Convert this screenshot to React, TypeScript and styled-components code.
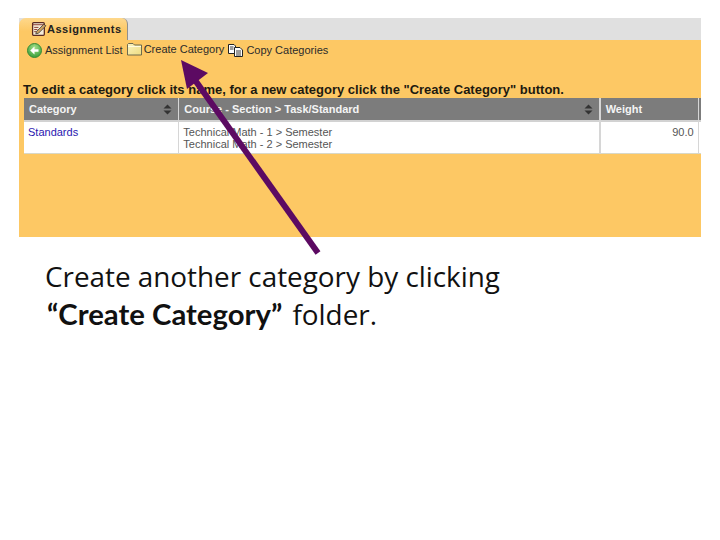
import React from 'react'
import styled, { createGlobalStyle } from 'styled-components'

const Global = createGlobalStyle`
  html, body { margin: 0; padding: 0; background: #fff; }
  body { width: 720px; height: 540px; overflow: hidden; font-family: "Liberation Sans", Arial, sans-serif; }
`

const Slide = styled.div`
  position: relative;
  width: 720px;
  height: 540px;
  padding: 18px 19px 0;
  box-sizing: border-box;
`

const Shot = styled.div`
  width: 682px;
  height: 219px;
  background: #fdc864;
  display: flex;
  flex-direction: column;
`

const TabBar = styled.div`
  height: 22px;
  background: #e0e0e0;
  display: flex;
`

const Tab = styled.div`
  width: 109px;
  background: linear-gradient(#fed88c, #fdc864 60%);
  border-radius: 7px 6px 0 0;
  border-right: 1px solid #8f8f8f;
  box-sizing: border-box;
  padding-left: 12px;
  display: flex;
  align-items: center;
  font-size: 11px;
  font-weight: bold;
  letter-spacing: 0.5px;
  color: #222;
`

const Toolbar = styled.div`
  height: 20px;
  padding-left: 8px;
  display: flex;
  align-items: center;
  font-size: 11px;
  color: #2b2b2b;
`

const ToolItem = styled.span<{ $gap: number; $lift?: number }>`
  display: flex;
  align-items: center;
  gap: ${p => p.$gap}px;
  margin-right: 4px;
  transform: translateY(${p => p.$lift || 0}px);
`

const Notice = styled.div`
  margin: 20px 0 0 4px;
  height: 18px;
  font-size: 13px;
  line-height: 19px;
  font-weight: bold;
  color: #1d1a10;
  white-space: nowrap;
`

const Table = styled.div`
  margin-left: 5px;
  width: 677px;
  height: 56px;
  background: #d6d6d6;
  display: grid;
  grid-template-columns: 154px 420px 97px 1fr;
  grid-template-rows: 24px 32px;
  column-gap: 1.33px;
`

const HeadCell = styled.div`
  height: 24px;
  border-bottom: 2px solid #d2d2d2;
  background: #7c7c7c;
  color: #f4f4f4;
  font-size: 11px;
  font-weight: bold;
  padding: 0 6px 0 5px;
  box-sizing: border-box;
  min-width: 0;
  display: flex;
  align-items: center;
  justify-content: space-between;
`

const EmptyHeadCell = styled(HeadCell)`
  padding: 0;
`

const BodyCell = styled.div<{ $right?: boolean }>`
  height: 32px;
  background: #fff;
  border-bottom: 1px solid #d8d8c8;
  box-sizing: border-box;
  min-width: 0;
  padding: 4px 4px 0;
  font-size: 11px;
  line-height: 12px;
  color: #555;
  text-align: ${p => (p.$right ? 'right' : 'left')};
`

const EmptyBodyCell = styled(BodyCell)`
  padding: 0;
`

const CategoryLink = styled.a`
  color: #2a17b0;
  text-decoration: none;
`

const Caption = styled.p`
  margin: 20px 0 0 26px;
  font-family: "Open Sans", sans-serif;
  font-size: 27.85px;
  line-height: 38px;
  color: #111;
`

const Strong = styled.b`
  font-family: Lato, sans-serif;
  font-size: 29.3px;
  margin: 0 3px 0 2px;
`

const Arrow = styled.svg`
  position: absolute;
  left: 0;
  top: 0;
  pointer-events: none;
`

const SortIcon = () => (
  <svg width="9" height="11" viewBox="0 0 9 11">
    <path d="M4.5 0.5 L8.5 4.5 H0.5 Z M0.5 6.5 H8.5 L4.5 10.5 Z" fill="#333" />
  </svg>
)

const NotepadIcon = () => (
  <svg width="16" height="16" viewBox="0 0 15 15">
    <rect x="1.5" y="1.5" width="11" height="12" rx="1" fill="#f5ecd8" stroke="#5a2a20" strokeWidth="1.2" />
    <path d="M1.5 3.5h11M3 6h4M3 8h3M3 10h2" stroke="#8a3a30" strokeWidth="0.9" />
    <path d="M5 10 L12 3 L14 4.5 L7 11.5 L4.5 12 Z" fill="#c9a060" stroke="#333" strokeWidth="0.7" />
  </svg>
)

const BackIcon = () => (
  <svg width="15" height="15" viewBox="0 0 15 15">
    <defs>
      <radialGradient id="backGlow" cx="50%" cy="30%" r="75%">
        <stop offset="0" stopColor="#a8e08a" />
        <stop offset="1" stopColor="#2f9a35" />
      </radialGradient>
    </defs>
    <circle cx="7.5" cy="7.5" r="7" fill="url(#backGlow)" stroke="#3a8a34" />
    <path d="M11.5 6.2H7.5V3.6L3.2 7.5L7.5 11.4V8.8H11.5Z" fill="#fff" />
  </svg>
)

const FolderIcon = () => (
  <svg width="16" height="14" viewBox="0 0 16 14">
    <defs>
      <linearGradient id="folderFill" x1="0" y1="0" x2="1" y2="1">
        <stop offset="0" stopColor="#fbf3c0" />
        <stop offset="1" stopColor="#eedc80" />
      </linearGradient>
    </defs>
    <path d="M0.5 13V2.5L1.5 1.5H6L7.5 3H14.5V13Z" fill="url(#folderFill)" stroke="#5f5f48" strokeWidth="0.9" />
    <path d="M1 4.5H14" stroke="#fffbe0" />
  </svg>
)

const CopyIcon = () => (
  <svg width="15" height="13" viewBox="0 0 15 13">
    <path d="M0.5 0.5H6L7.5 2V9.5H0.5Z" fill="#fff" stroke="#222" />
    <path d="M6.5 3.5H12L14.5 6V12.5H6.5Z" fill="#fff" stroke="#222" />
    <path d="M2 3H5.5M2 5H5.5M8 7H13M8 9H13M8 11H13" stroke="#222" strokeWidth="0.9" />
  </svg>
)

const App = () => (
  <>
    <Global />
    <Slide>
      <Shot>
        <TabBar>
          <Tab>
            <NotepadIcon />
            Assignments
          </Tab>
        </TabBar>
        <Toolbar>
          <ToolItem $gap={3}>
            <BackIcon />
            Assignment List
          </ToolItem>
          <ToolItem $gap={1} $lift={-1}>
            <FolderIcon />
            Create Category
          </ToolItem>
          <ToolItem $gap={3}>
            <CopyIcon />
            Copy Categories
          </ToolItem>
        </Toolbar>
        <Notice>To edit a category click its name, for a new category click the "Create Category" button.</Notice>
        <Table>
          <HeadCell>
            Category
            <SortIcon />
          </HeadCell>
          <HeadCell>
            Course - Section &gt; Task/Standard
            <SortIcon />
          </HeadCell>
          <HeadCell>Weight</HeadCell>
          <EmptyHeadCell />
          <BodyCell>
            <CategoryLink>Standards</CategoryLink>
          </BodyCell>
          <BodyCell>
            Technical Math - 1 &gt; Semester
            <br />
            Technical Math - 2 &gt; Semester
          </BodyCell>
          <BodyCell $right>90.0</BodyCell>
          <EmptyBodyCell />
        </Table>
      </Shot>
      <Caption>
        Create another category by clicking
        <br />
        <Strong>“Create Category”</Strong> folder.
      </Caption>
      <Arrow width="720" height="540" viewBox="0 0 720 540">
        <path d="M318 253 L190 73" stroke="#5c0a62" strokeWidth="6" fill="none" />
        <path d="M181 60 L208 73 L187 89 Z" fill="#5c0a62" />
      </Arrow>
    </Slide>
  </>
)

export default App
